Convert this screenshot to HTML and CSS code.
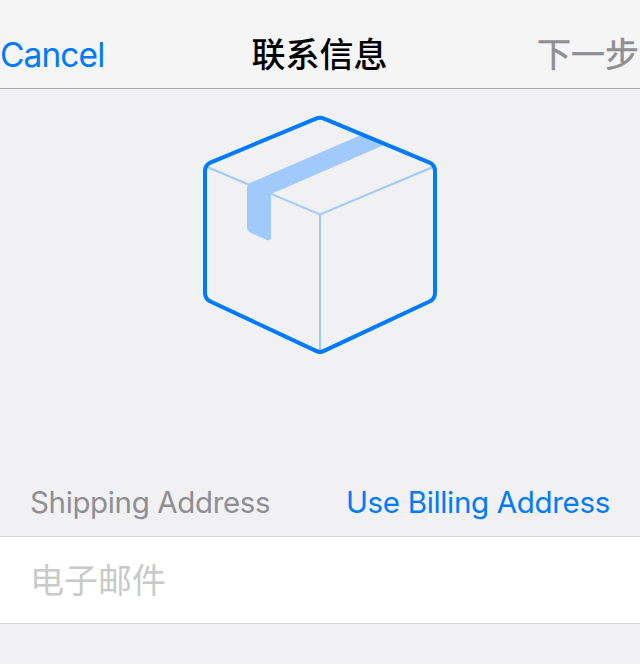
FILE: index.html
```html
<!DOCTYPE html>
<html lang="zh-CN">
<head>
<meta charset="utf-8">
<title>联系信息</title>
<link rel="stylesheet" href="styles.css">
</head>
<body>
<header class="navbar">
  <a class="cancel">Cancel</a>
  <h1 class="title">联系信息</h1>
  <span class="next">下一步</span>
</header>
<main>
  <div class="hero">
    <svg class="box" width="240" height="244" viewBox="200 112 240 244" fill="none">
      <path class="tape" d="M247 188Q247 184 251 182.500L361 135L384 145L271 194V237Q271 241 267 240L251 233Q247 231 247 227Z"/>
      <path class="edge" d="M207 167L320 214.500L433 167M320 214.500V351"/>
      <path class="outline" d="M316 118.700Q320 117 324 118.700L429 162.300Q435 165 435 171V293Q435 299 429.500 301.500L324 350.900Q320 352.900 316 350.900L210.500 301.500Q205 299 205 293V171Q205 165 211 162.300Z"/>
    </svg>
  </div>
  <div class="section-head">
    <h2 class="label">Shipping Address</h2>
    <a class="action">Use Billing Address</a>
  </div>
  <div class="field"><span class="placeholder">电子邮件</span></div>
</main>
</body>
</html>
```
FILE: styles.css
```css
* { box-sizing: border-box; }
body {
  margin: 0;
  height: 665px;
  background: #f1f1f4;
  border-bottom: 1px solid #fff;
  font-family: Inter, "Noto Sans CJK SC", sans-serif;
  line-height: 40px;
}
h1, h2 { margin: 0; }
.navbar {
  display: grid;
  grid-template-columns: 1fr auto 1fr;
  height: 89px;
  padding-top: 35px;
  background: #f5f5f5;
  border-bottom: 1px solid #a9a9ab;
  font-size: 34px;
  white-space: nowrap;
}
.cancel { color: #007aff; font-size: 33.5px; letter-spacing: -0.9px; }
.title { margin-left: -1px; font-size: 34px; font-weight: 500; }
.next {
  padding-right: 1px;
  color: #8e8e93;
  text-align: right;
  -webkit-text-stroke: 0.5px #8e8e93;
}
.hero { display: flex; justify-content: center; height: 393px; padding-top: 23px; }
.tape { fill: #9fcafa; }
.edge { stroke: #9fcafa; stroke-width: 2; }
.outline { stroke: #007aff; stroke-width: 4; stroke-linejoin: round; }
.section-head {
  display: flex;
  justify-content: space-between;
  height: 54px;
  padding: 0 30px;
}
.label, .action { font-size: 29.5px; font-weight: 400; }
.label { color: #8e8e93; letter-spacing: -0.37px; }
.action { color: #007aff; letter-spacing: -0.32px; }
.field {
  height: 88px;
  padding: 24px 30px;
  background: #fff;
  border: solid #d6d6d9;
  border-width: 1px 0;
  font-size: 34px;
}
.placeholder { color: #c9c9c9; }
```
